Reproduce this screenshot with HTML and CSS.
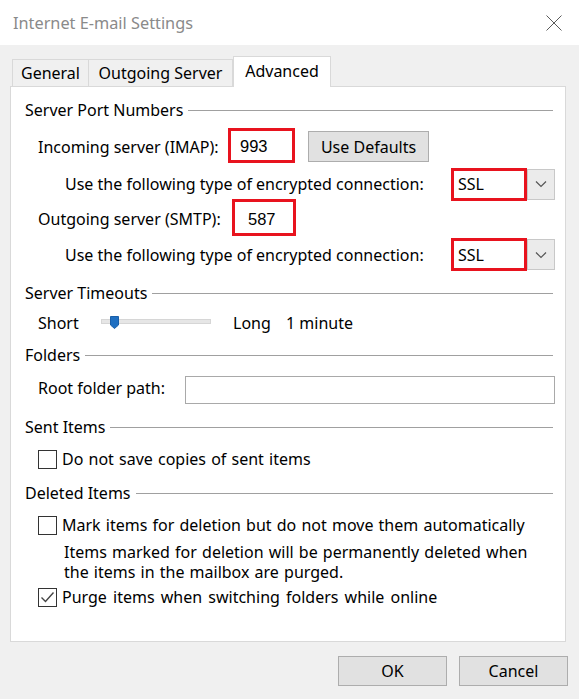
FILE: index.html
```html
<!DOCTYPE html>
<html>
<head>
<meta charset="utf-8">
<link rel="stylesheet" href="styles.css">
</head>
<body>
<div class="titlebar">
  <span class="title">Internet E-mail Settings</span>
  <svg class="close" width="16" height="16" viewBox="0 0 16 16"><path d="M0.5 0.5 L15.5 15.5 M15.5 0.5 L0.5 15.5" stroke="#5a5a5a" stroke-width="1" fill="none"/></svg>
</div>
<div class="main">
  <div class="tabs">
    <div class="tab t-general">General</div>
    <div class="tab t-out">Outgoing Server</div>
    <div class="tab t-adv active">Advanced</div>
  </div>
  <div class="panel">
    <div class="gh">Server Port Numbers</div>
    <div class="row r-in">
      <span class="lbl w-in">Incoming server (IMAP):</span>
      <span class="port mark p-in">993</span>
      <span class="btn b-def">Use Defaults</span>
    </div>
    <div class="row r-enc1">
      <span class="lbl ind2">Use the following type of encrypted connection:</span>
      <span class="combo">
        <span class="sel mark2">SSL</span>
        <span class="arrow"><svg width="12" height="8" viewBox="0 0 12 8"><path d="M1 1.5 L6 6.5 L11 1.5" stroke="#555" stroke-width="1.2" fill="none"/></svg></span>
      </span>
    </div>
    <div class="row r-out">
      <span class="lbl w-out">Outgoing server (SMTP):</span>
      <span class="port mark p-out">587</span>
    </div>
    <div class="row r-enc2">
      <span class="lbl ind2">Use the following type of encrypted connection:</span>
      <span class="combo">
        <span class="sel mark2">SSL</span>
        <span class="arrow"><svg width="12" height="8" viewBox="0 0 12 8"><path d="M1 1.5 L6 6.5 L11 1.5" stroke="#555" stroke-width="1.2" fill="none"/></svg></span>
      </span>
    </div>

    <div class="gh g-time">Server Timeouts</div>
    <div class="row r-short">
      <span class="lbl w-short">Short</span>
      <span class="track"><svg class="thumb" width="9" height="13" viewBox="0 0 9 13"><path d="M0.5 0.5 H8.5 V9 L4.5 12.5 L0.5 9 Z" fill="#1f6fc1" stroke="#1a5fa8" stroke-width="1"/></svg></span>
      <span class="w-long">Long</span>
      <span>1 minute</span>
    </div>

    <div class="gh g-fold">Folders</div>
    <div class="row r-root">
      <span class="lbl w-root">Root folder path:</span>
      <span class="textbox"></span>
    </div>

    <div class="gh g-sent">Sent Items</div>
    <div class="row r-chk1">
      <span class="cb"></span>
      <span class="sent">Do not save copies of sent items</span>
    </div>

    <div class="gh g-del">Deleted Items</div>
    <div class="row r-chk2">
      <span class="cb"></span>
      <span class="sent">Mark items for deletion but do not move them automatically</span>
    </div>
    <div class="info sent">Items marked for deletion will be permanently deleted when<br>the items in the mailbox are purged.</div>
    <div class="row r-chk3">
      <span class="cb"><svg width="17" height="17" viewBox="0 0 17 17"><path d="M2.5 8.5 L6.5 12.5 L14.5 3.5" stroke="#444" stroke-width="1.4" fill="none"/></svg></span>
      <span class="sent wide">Purge items when switching folders while online</span>
    </div>
  </div>
  <div class="actions">
    <span class="btn b-act">OK</span>
    <span class="btn b-act">Cancel</span>
  </div>
</div>
</body>
</html>
```
FILE: styles.css
```css
html, body {
  margin: 0;
  padding: 0;
}
body {
  width: 579px;
  height: 699px;
  overflow: hidden;
  background: #f0f0f0;
  font-family: "Noto Sans", "Segoe UI", sans-serif;
  font-size: 16px;
  color: #000;
}
.sent {
  word-spacing: 1px;
}
.sent.wide {
  word-spacing: 2px;
}
.titlebar {
  height: 45px;
  background: #fff;
  display: flex;
  align-items: center;
  padding-left: 13px;
  padding-right: 17px;
}
.title {
  font-size: 16.3px;
  color: #8a8a8a;
}
.close {
  margin-left: auto;
  margin-top: 1px;
}
.main {
  padding: 11px 0 0 10px;
}
.tabs {
  display: flex;
  align-items: flex-end;
  height: 31px;
  margin-left: 2px;
  margin-bottom: -1px;
  position: relative;
  z-index: 1;
}
.tab {
  box-sizing: border-box;
  height: 27px;
  margin-bottom: 1px;
  border: 1px solid #d9d9d9;
  border-bottom: none;
  background: #f0f0f0;
  display: flex;
  align-items: center;
  justify-content: center;
}
.t-general { width: 77px; }
.t-out { width: 144px; border-left: none; }
.t-adv { width: 98px; }
.tab.active {
  height: 31px;
  margin-bottom: 0;
  background: #fff;
  padding-bottom: 2px;
}
.panel {
  box-sizing: border-box;
  width: 556px;
  height: 556px;
  background: #fff;
  border: 1px solid #d9d9d9;
  padding: 13px 10px 0 14px;
}
.gh {
  display: flex;
  align-items: center;
  height: 20px;
}
.gh::after {
  content: "";
  flex: 1;
  height: 1px;
  background: #a0a0a0;
  margin-left: 5px;
  margin-right: 2px;
}
.row {
  display: flex;
  align-items: center;
}
.lbl { margin-left: 13px; }
.ind2 { margin-left: 40px; }
.w-in { width: 193px; flex: none; }
.w-out { width: 197px; flex: none; }
.w-short { width: 63px; flex: none; }
.w-root { width: 147px; flex: none; margin-bottom: 5px; }
.r-in { margin-top: 4px; height: 44px; padding-top: 1px; box-sizing: border-box; }
.r-enc1 { height: 32px; }
.r-out { height: 38px; }
.r-enc2 { height: 33px; }
.port {
  box-sizing: border-box;
  background: #fff;
  font-family: "Liberation Sans", Arial, sans-serif;
  font-size: 16.5px;
  display: flex;
  align-items: center;
  position: relative;
}
.p-in { width: 61px; height: 32px; padding-left: 9px; }
.p-out { width: 58px; height: 34px; padding-left: 13px; }
.mark::after {
  content: "";
  position: absolute;
  top: -3px;
  left: -3px;
  right: -3px;
  bottom: 0;
  border: 3px solid #e8131e;
}
.btn {
  box-sizing: border-box;
  background: #e1e1e1;
  border: 1px solid #adadad;
  display: flex;
  align-items: center;
  justify-content: center;
}
.b-def {
  width: 121px;
  height: 31px;
  margin-left: 16px;
}
.combo {
  margin-left: auto;
  display: flex;
  height: 31px;
}
.sel {
  box-sizing: border-box;
  width: 73px;
  background: #fff;
  padding-left: 4px;
  display: flex;
  align-items: center;
  position: relative;
}
.mark2::after {
  content: "";
  position: absolute;
  top: -1px;
  bottom: -1px;
  left: -3px;
  right: 0;
  border: 3px solid #e8131e;
}
.arrow {
  box-sizing: border-box;
  width: 28px;
  border: 1px solid #c8c8c8;
  background: #ebebeb;
  display: flex;
  align-items: center;
  justify-content: center;
}
.g-time { margin-top: 12px; }
.r-short { margin-top: 5px; height: 30px; }
.track {
  box-sizing: border-box;
  width: 110px;
  height: 5px;
  flex: none;
  background: #e6e6e6;
  border: 1px solid #d6d6d6;
  position: relative;
  margin-bottom: 4px;
}
.thumb {
  position: absolute;
  left: 8px;
  top: -4px;
}
.w-long { width: 53px; margin-left: 22px; flex: none; }
.g-fold { margin-top: 7px; }
.r-root { margin-top: 10px; height: 30px; }
.textbox {
  flex: 1;
  height: 28px;
  box-sizing: border-box;
  border: 1px solid #a9a9a9;
  background: #fff;
}
.g-sent { margin-top: 12px; }
.r-chk1 { margin-top: 12px; height: 20px; }
.g-del { margin-top: 14px; }
.r-chk2 { margin-top: 12px; height: 20px; }
.cb {
  box-sizing: border-box;
  width: 19px;
  height: 19px;
  flex: none;
  border: 1px solid #333;
  background: #fff;
  margin-left: 13px;
  margin-right: 5px;
  display: flex;
}
.info {
  margin-top: 7px;
  padding-left: 39px;
  line-height: 20px;
}
.r-chk3 { margin-top: 5px; height: 20px; }
.actions {
  display: flex;
  justify-content: flex-end;
  gap: 12px;
  margin-top: 14px;
  padding-right: 11px;
}
.b-act {
  width: 109px;
  height: 30px;
}
```
